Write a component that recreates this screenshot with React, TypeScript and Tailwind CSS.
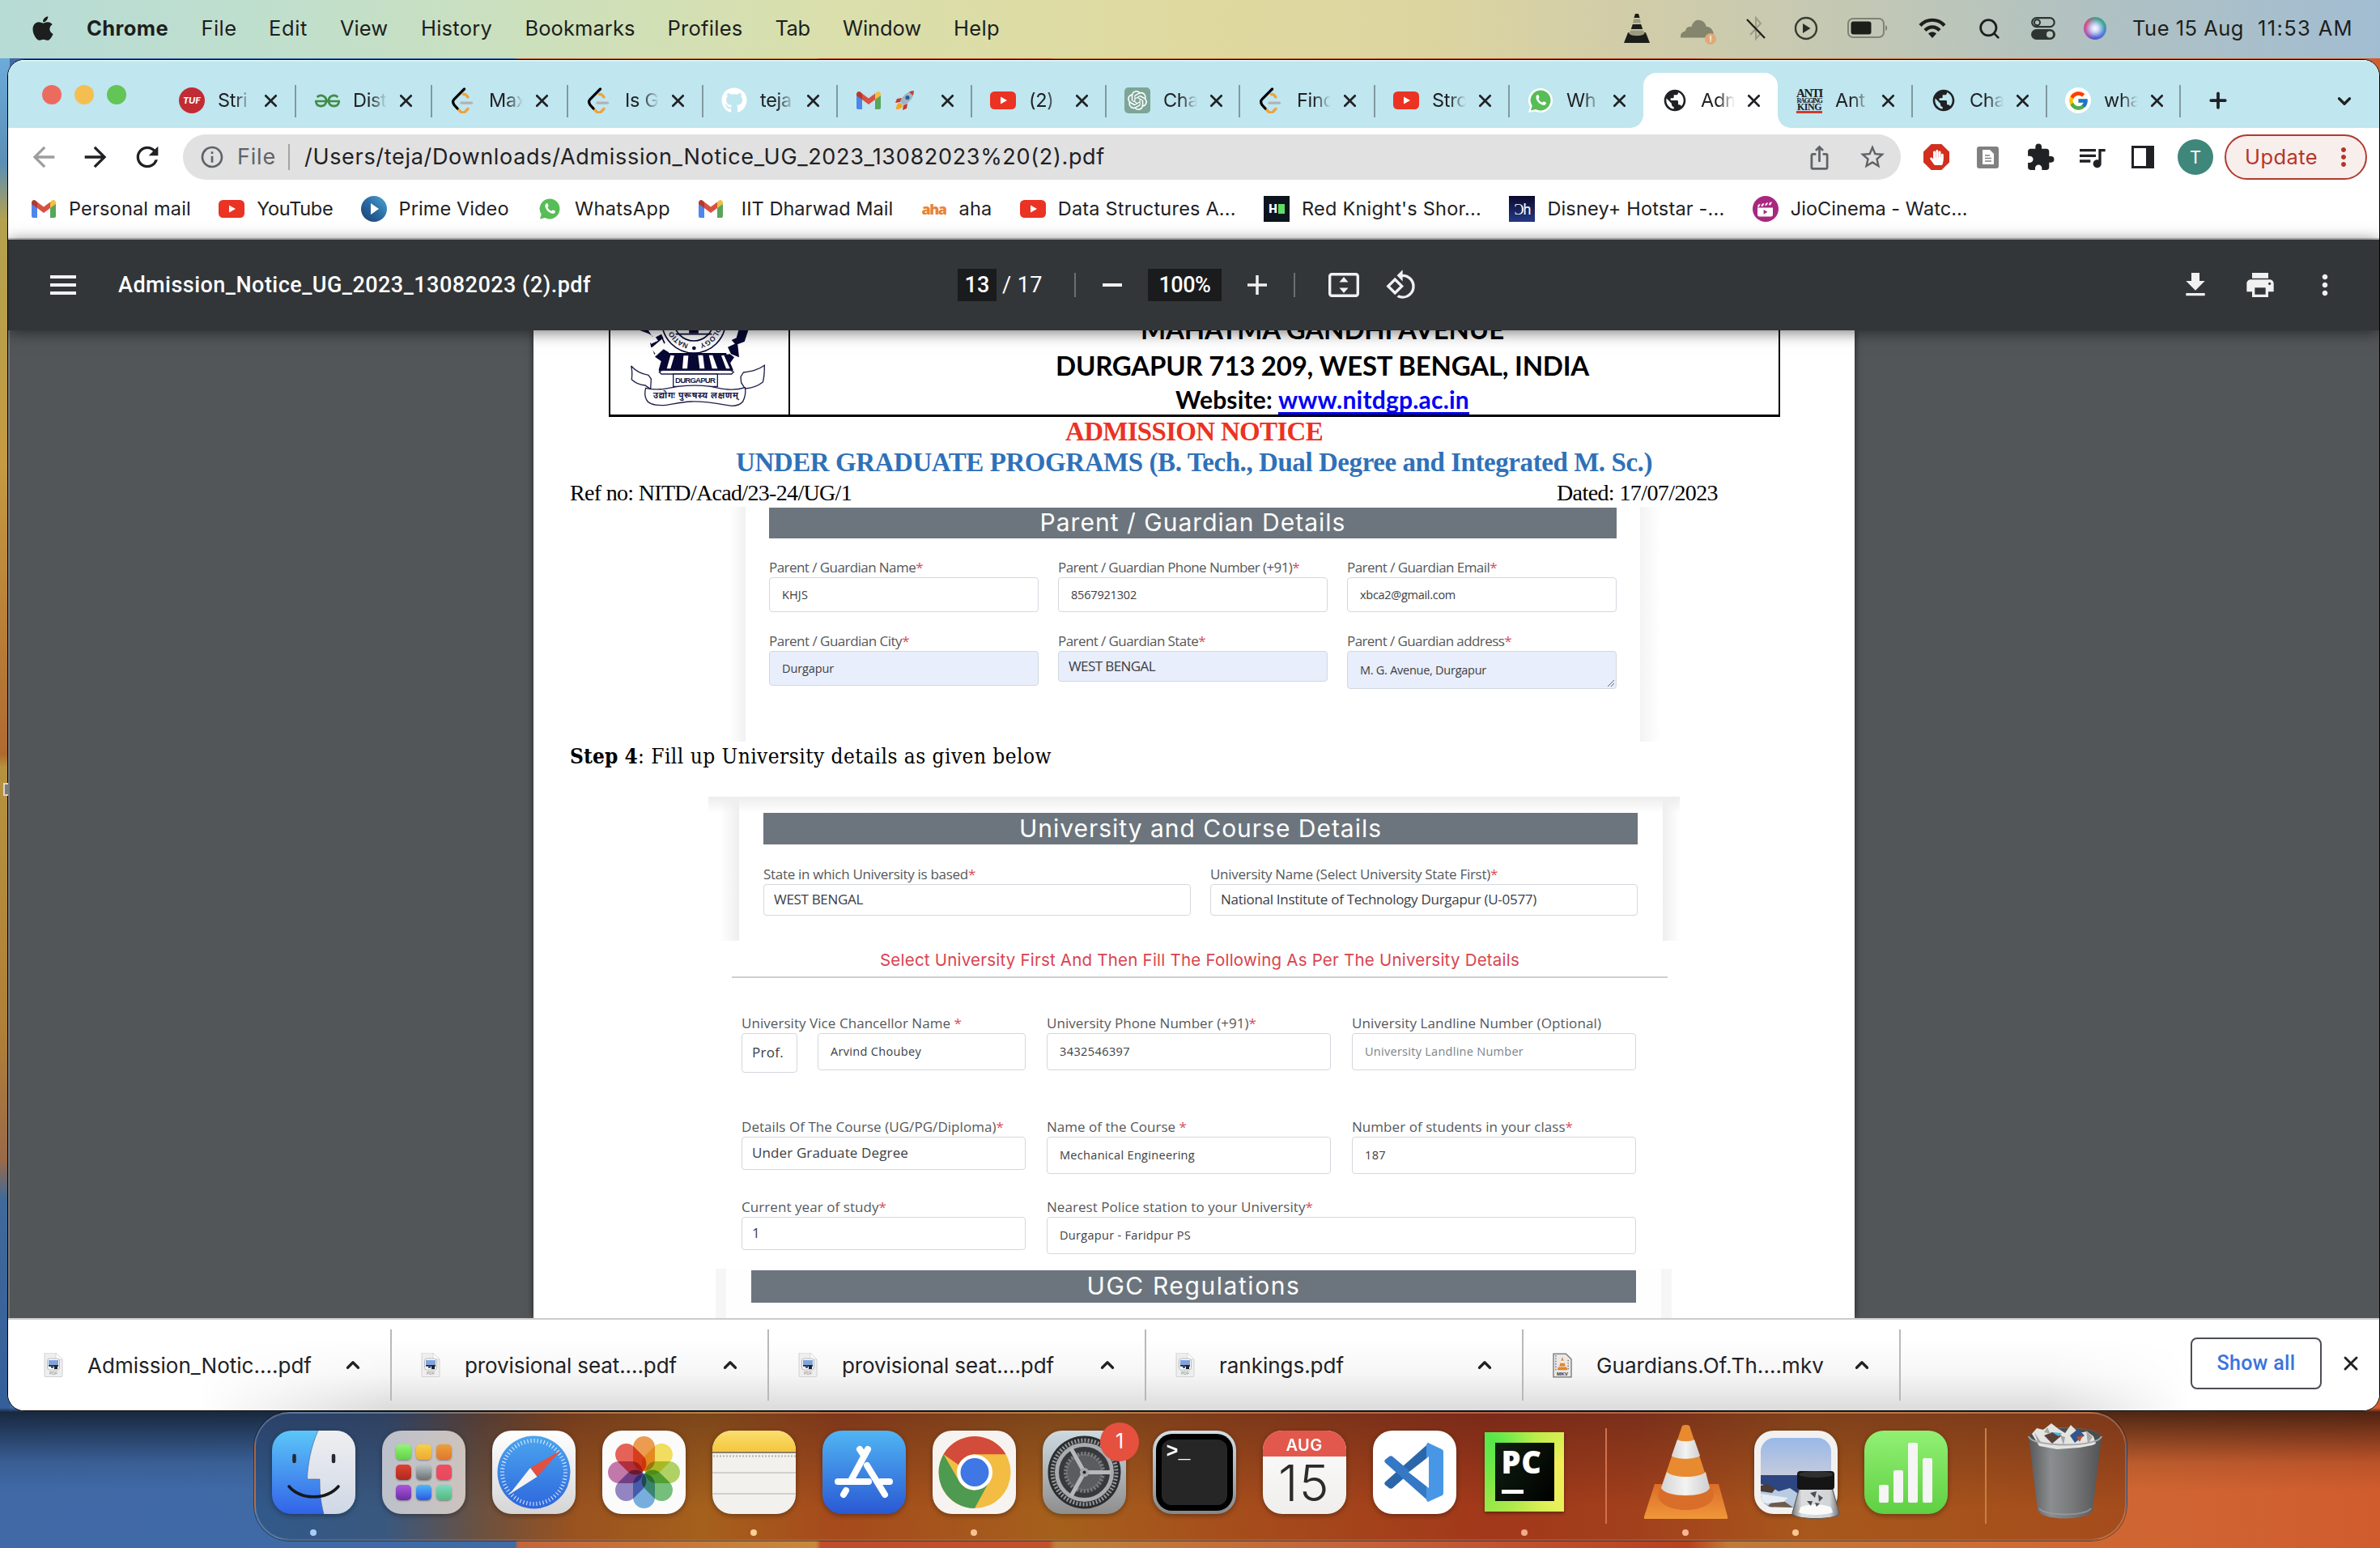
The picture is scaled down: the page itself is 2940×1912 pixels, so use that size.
import { useLayoutEffect, useRef, useState, type ReactNode } from "react";
import { FaApple, FaGithub, FaHandPaper } from "react-icons/fa";
import { FcGoogle } from "react-icons/fc";
import { SiGeeksforgeeks, SiOpenai } from "react-icons/si";
import {
  MdExtension, MdStarOutline, MdIosShare, MdQueueMusic, MdPublic, MdRotate90DegreesCcw, MdPrint,
  MdFileDownload, MdMoreVert, MdRefresh, MdInfoOutline, MdArrowBack, MdArrowForward,
} from "react-icons/md";
import { ChevronDown, ChevronUp, Plus, Search, X } from "lucide-react";

/* Single line of text whose tracking is adjusted to occupy an exact width. */
function Fit({ w, className = "", children }: { w: number; className?: string; children: ReactNode }) {
  const ref = useRef<HTMLSpanElement>(null);
  const [ls, setLs] = useState(0);
  useLayoutEffect(() => {
    const el = ref.current;
    if (!el) return;
    el.style.letterSpacing = "0px";
    const natural = el.getBoundingClientRect().width;
    const n = (el.textContent || "").length || 1;
    const next = (w - natural) / n;
    el.style.letterSpacing = next + "px";
    setLs(next);
  }, [w]);
  return (
    <span ref={ref} className={"inline-block shrink-0 whitespace-pre " + className} style={{ letterSpacing: ls }}>
      {children}
    </span>
  );
}

/* ---------- small logos ---------- */
function Gmail({ className = "" }: { className?: string }) {
  return (
    <svg viewBox="0 0 30 22" className={"h-[22px] w-[30px] " + className}>
      <path d="M0 3v17a2 2 0 0 0 2 2h5V9z" fill="#4f86ec" />
      <path d="M30 3v17a2 2 0 0 1-2 2h-5V9z" fill="#58a55c" />
      <path d="M23 2.500V10l7-5V3.500C30 .5 27-.8 25 .8z" fill="#f1bf42" />
      <path d="M0 3.500V5l7 5V2.500L5 .8C3-.8 0 .5 0 3.500z" fill="#b4392d" />
      <path d="M7 10V2.500l8 6 8-6V10l-8 6z" fill="#d85140" />
    </svg>
  );
}
function YouTubeMark() {
  return (
    <svg viewBox="0 0 32 22" className="h-[22px] w-8">
      <rect width="32" height="22" rx="5.500" fill="#ea3323" />
      <path d="M13 6.500v9l8-4.500z" fill="#fff" />
    </svg>
  );
}
function WhatsApp({ halo = false }: { halo?: boolean }) {
  return (
    <svg viewBox="0 0 30 30" className="size-[30px]">
      {halo && <path d="M15 0a15 15 0 1 1-6.500 28.500L0 30l2-7.500A15 15 0 0 1 15 0z" fill="#fff" />}
      <path d="M15 2.500a12.500 12.500 0 1 1-6 23.500L3 27.500l1.700-5.700A12.500 12.500 0 0 1 15 2.500z" fill="#57bd56" />
      <path d="M10.500 8.500c1-.8 1.800-.5 2.200.5l.8 2c.3.800-1 1.800-1 2.200.5 1.500 2.800 3.800 4.600 4.300.6.200 1.500-1.600 2.200-1.300l2.300 1.200c.6.300.4 1.800-.3 2.500-1.500 1.500-4.200 1.200-7-.8-3-2.200-6.700-7.600-3.800-10.600z" fill="#fff" />
    </svg>
  );
}
function Rocket() {
  return (
    <svg viewBox="0 0 26 26" className="size-[26px]">
      <path d="M2 24c0-5 2-8 5-8l3 3c0 3-3 5-8 5z" fill="#f5a623" />
      <path d="M9 10l-6 1-2 5 6-1zM16 17l-1 6-5 2 1-6z" fill="#c8372d" />
      <path d="M7 15C9 8 15 2 24 1c0 9-6 15-13 18z" fill="#9fb4c4" />
      <path d="M18 2.500C20 1.500 22 1 24 1c0 2-.4 4-1.300 6z" fill="#c8372d" />
      <circle cx="16" cy="9.500" r="2.600" fill="#2a5f8f" />
    </svg>
  );
}
function Fav({ kind }: { kind: string }) {
  switch (kind) {
    case "tuf":
      return (
        <span className="flex size-8 items-center justify-center rounded-full bg-[#c22b33] font-['Lato'] text-[12px] font-black italic text-white">
          TUF
        </span>
      );
    case "gfg": return <SiGeeksforgeeks className="size-[31px] text-[#3f8d46]" />;
    case "lc":
      return (
        <svg viewBox="0 0 32 32" className="size-8">
          <path d="M9 26l4 4c1.500 1.300 4 1.300 5.500 0l3.500-3.500" fill="none" stroke="#f0a13a" strokeWidth="3.200" strokeLinecap="round" />
          <path d="M16.500 8.500c2-.6 3.800 1 5.500 3.500" fill="none" stroke="#f0a13a" strokeWidth="3.200" strokeLinecap="round" />
          <path d="M17.500 2L5 14.500c-1.800 2-1.800 4.500 0 7L9 26" fill="none" stroke="#000" strokeWidth="3.200" strokeLinecap="round" />
          <path d="M14 19.200h12.500" stroke="#b3b3b3" strokeWidth="3.200" strokeLinecap="round" />
        </svg>
      );
    case "gh": return <FaGithub className="size-8 text-white" />;
    case "gmail": return <Gmail />;
    case "yt": return <YouTubeMark />;
    case "gpt":
      return (
        <span className="flex size-8 items-center justify-center rounded-[5px] bg-[#7ca597]">
          <SiOpenai className="size-6 text-white" />
        </span>
      );
    case "wa": return <WhatsApp halo />;
    case "globe": return <MdPublic className="size-8 text-[#202124]" />;
    case "anti":
      return (
        <span className="flex w-8 flex-col items-center border-b-[3px] border-[#d23a2c] font-['Liberation_Serif'] font-bold text-[#18202a]">
          <Fit w={32} className="text-[15px] leading-[14px]">ANTI</Fit>
          <Fit w={31} className="text-[8px] leading-[6px]">RAGGING</Fit>
          <Fit w={30} className="text-[12px] leading-[9px]">KING</Fit>
        </span>
      );
    default:
      return (
        <span className="flex size-8 items-center justify-center rounded-full bg-white">
          <FcGoogle className="size-[27px]" />
        </span>
      );
  }
}

/* ---------- menu bar ---------- */
function MenuBar() {
  return (
    <div className="flex h-[72px] shrink-0 items-center bg-[linear-gradient(90deg,#b7dcd6_0%,#c0dfcc_12%,#cee0ba_24%,#dadfac_35%,#dfd99f_50%,#dcd5a0_60%,#d2cda8_68%,#c3c8b4_78%,#b0c1c2_88%,#a2bdd2_100%)] pb-0.5 font-['Inter'] text-[25.500px] text-[#1c1f1d]">
      <FaApple className="ml-[36px] size-[34px]" />
      <Fit w={101} className="ml-[37px] font-bold">Chrome</Fit>
      <Fit w={44} className="ml-[40.500px]">File</Fit>
      <Fit w={48} className="ml-[39.500px]">Edit</Fit>
      <Fit w={59} className="ml-[40px]">View</Fit>
      <Fit w={88} className="ml-[41px]">History</Fit>
      <Fit w={136} className="ml-[40.500px]">Bookmarks</Fit>
      <Fit w={93} className="ml-[40px]">Profiles</Fit>
      <Fit w={43} className="ml-[40px]">Tab</Fit>
      <Fit w={97} className="ml-[40.500px]">Window</Fit>
      <Fit w={57} className="ml-[40px]">Help</Fit>
      <div className="grow" />
      <svg viewBox="0 0 32 36" className="mr-[34px] h-9 w-8">
        <path d="M14 0h4l1.600 5h-7.200zM10.800 13h10.400l2 6H8.800zM6 23l-1 .3L0 36h32l-5-12.700L25 23c-2 5-16 5-19 0z" fill="#1b1d18" />
        <path d="M12.200 6.500h7.600l1.200 5H11zM8 20.500h16l1.500 4c-2 3.500-17 3.500-19 0z" fill="#9b9a80" />
      </svg>
      <div className="relative mr-[34px] h-[36px] w-[50px]">
        <svg viewBox="0 0 50 30" className="mt-[7px] h-[25px] w-[50px]">
          <path d="M0 27c-1-6 3-9 7-10 1-5 4-7 9-6C18 4 22 1 26 1c7 0 11 5 12 10 6-1 12 6 11 16z" fill="#85846c" />
        </svg>
        <span className="absolute right-0.5 -bottom-0.5 flex h-[14px] w-[14px] items-center justify-center rounded-full bg-[#dfa97a] text-[11px] font-bold text-[#f5eee0]">!</span>
      </div>
      <svg viewBox="0 0 26 32" className="mr-[34px] h-8 w-[26px]" fill="none">
        <path d="M6 24L19 10l-6-7v26l6-7L7 11" stroke="#9d9d87" strokeWidth="2" />
        <path d="M2 5l22 23" stroke="#1d1f1a" strokeWidth="2.200" />
      </svg>
      <svg viewBox="0 0 30 30" className="mr-[36px] size-[30px]">
        <circle cx="15" cy="15" r="13" fill="none" stroke="#383b33" strokeWidth="2.400" />
        <path d="M11 9l9.500 6L11 21z" fill="#2b2d27" />
      </svg>
      <svg viewBox="0 0 50 26" className="mr-[38px] h-[26px] w-[50px]">
        <rect x="1" y="1" width="44" height="23" rx="6" fill="none" stroke="#7f8376" strokeWidth="2" />
        <rect x="4.500" y="4.500" width="25" height="16" rx="3" fill="#1c1e1a" />
        <path d="M47 9c3 1 3 6 0 7z" fill="#7f8376" />
      </svg>
      <svg viewBox="0 0 34 26" className="mr-[39px] h-[26px] w-[34px]" fill="none" stroke="#1c1f1d" strokeWidth="4.200">
        <path d="M2 9.500C10 .5 24 .5 32 9.500M8 15.500c5-5.600 13-5.600 18 0" />
        <path d="M17 25l-5-5.500c3-2.600 7-2.600 10 0z" fill="#1c1f1d" stroke="none" />
      </svg>
      <Search className="mr-[37px] size-[29px] text-[#1c1f1d]" strokeWidth={2.300} />
      <svg viewBox="0 0 30 28" className="mr-[35px] h-7 w-[30px]">
        <rect x="1.200" y="1.200" width="27.500" height="11" rx="5.500" fill="none" stroke="#2e3431" strokeWidth="2.200" />
        <circle cx="7.500" cy="6.700" r="3.500" fill="none" stroke="#2e3431" strokeWidth="2" />
        <rect x="0" y="15" width="30" height="13" rx="6.500" fill="#2e3431" />
        <circle cx="23" cy="21.500" r="4" fill="#b9c4be" />
      </svg>
      <span className="mr-[32px] size-[28px] rounded-full bg-[radial-gradient(circle_at_50%_50%,#fff_0%,#c8d4f5_25%,transparent_60%),conic-gradient(#4d9c8f,#37a892,#4f7fd8,#4b5bd0,#b455b8,#d84f7f,#4d9c8f)]" />
      <Fit w={138}>Tue 15 Aug</Fit>
      <Fit w={118} className="mr-[33px] ml-[17px]">11:53 AM</Fit>
    </div>
  );
}

/* ---------- tabs ---------- */
const TABS: { k: string; t: string; w: string; active?: boolean; nosep?: boolean }[] = [
  { k: "tuf", t: "Stri", w: "w-[167px]" },
  { k: "gfg", t: "Dist", w: "w-[168px]" },
  { k: "lc", t: "Max", w: "w-[168px]" },
  { k: "lc", t: "Is G", w: "w-[167px]" },
  { k: "gh", t: "teja", w: "w-[166px]" },
  { k: "gmail", t: "rocket", w: "w-[166px]" },
  { k: "yt", t: "(2)", w: "w-[166px]" },
  { k: "gpt", t: "Cha", w: "w-[165px]" },
  { k: "lc", t: "Find", w: "w-[167px]" },
  { k: "yt", t: "Stro", w: "w-[166px]" },
  { k: "wa", t: "Wh", w: "w-[166px]", nosep: true },
  { k: "globe", t: "Adm", w: "w-[166px]", active: true, nosep: true },
  { k: "anti", t: "Ant", w: "w-[166px]" },
  { k: "globe", t: "Cha", w: "w-[166px]" },
  { k: "google", t: "wha", w: "w-[165px]" },
];
function TabStrip() {
  return (
    <div className="flex h-[84px] shrink-0 border-t-[2px] border-[#d9f1f6] bg-[#c0e6ef]">
      <div className="mt-[29px] flex w-[188px] gap-4 pl-[42px]">
        <span className="size-6 rounded-full bg-[#ec6b5f]" />
        <span className="size-6 rounded-full bg-[#f4bf50]" />
        <span className="size-6 rounded-full bg-[#62c555]" />
      </div>
      {TABS.map((t, i) => (
        <div key={i} className={"relative mt-[14px] flex h-[68px] shrink-0 items-center pl-[23px] " + t.w + (t.active ? " rounded-t-[16px] bg-white" : "")}>
          {t.active && (
            <>
              <span className="absolute bottom-0 -left-4 size-4 bg-[radial-gradient(circle_at_0_0,transparent_15.500px,#fff_16px)]" />
              <span className="absolute -right-4 bottom-0 size-4 bg-[radial-gradient(circle_at_100%_0,transparent_15.500px,#fff_16px)]" />
            </>
          )}
          <span className="flex w-8 items-center justify-center"><Fav kind={t.k} /></span>
          <span className="ml-4 w-[42px] font-['Inter'] text-[23.500px] tracking-[-0.3px] whitespace-pre text-[#202124] [mask-image:linear-gradient(90deg,#000_50%,transparent_100%)]">
            {t.t === "rocket" ? <Rocket /> : t.t}
          </span>
          <X className="ml-[11px] size-[25px] shrink-0 text-[#202124]" strokeWidth={2.500} />
          {!t.nosep && <span className="absolute top-[15px] -right-px h-10 w-0.5 bg-[#81999f]" />}
        </div>
      ))}
      <Plus className="mt-[33px] ml-[32px] size-[30px] text-[#202124]" strokeWidth={3} />
      <div className="grow" />
      <ChevronDown className="mt-[36px] mr-[30px] size-[26px] text-[#202124]" strokeWidth={3} />
    </div>
  );
}

function NavBar() {
  return (
    <div className="flex h-[72px] shrink-0 items-center bg-white">
      <MdArrowBack className="ml-[24px] size-[40px] text-[#9e9e9e]" />
      <MdArrowForward className="ml-[24px] size-[40px] text-[#202124]" />
      <MdRefresh className="ml-[24px] size-[40px] text-[#202124]" />
      <div className="ml-[24px] flex h-14 w-[2122px] items-center rounded-full bg-[#e1e1e1] font-['Inter'] text-[27px]">
        <MdInfoOutline className="ml-[20px] size-8 text-[#5f6368]" />
        <Fit w={48} className="ml-[15px] text-[#5f6368]">File</Fit>
        <span className="ml-[15px] h-8 w-0.5 bg-[#a3a4a6]" />
        <Fit w={989} className="ml-[18px] text-[#202124]">/Users/teja/Downloads/Admission_Notice_UG_2023_13082023%20(2).pdf</Fit>
        <div className="grow" />
        <MdIosShare className="mr-[31px] size-[33px] text-[#5f6368]" />
        <MdStarOutline className="mr-[17px] size-[36px] text-[#5f6368]" />
      </div>
      <span className="ml-[28px] flex size-8 items-center justify-center bg-[#d1301f] [clip-path:polygon(30%_0,70%_0,100%_30%,100%_70%,70%_100%,30%_100%,0_70%,0_30%)]">
        <FaHandPaper className="size-[19px] text-white" />
      </span>
      <span className="ml-[34px] flex h-[27px] w-[27px] items-center justify-center rounded-[3px] bg-[#808080]">
        <svg viewBox="0 0 14 18" className="h-[18px] w-[14px]">
          <path d="M0 0h9l5 5v13H0z" fill="#fff" />
          <path d="M3 7h6M3 10.500h8M3 14h8" stroke="#808080" strokeWidth="1.600" />
        </svg>
      </span>
      <MdExtension className="ml-[33px] size-[37px] text-[#202124]" />
      <MdQueueMusic className="ml-[25px] size-[40px] text-[#202124]" />
      <span className="ml-[29px] h-7 w-[28px] border-[3.500px] border-r-[10px] border-[#202124]" />
      <span className="ml-[29px] flex size-11 items-center justify-center rounded-full bg-[#3f877a] font-['Roboto'] text-[22px] text-white">T</span>
      <div className="ml-[14px] flex h-14 w-[176px] items-center rounded-full border-2 border-[#b23a2e] bg-[#f8eeec] text-[#b3362b]">
        <Fit w={90} className="ml-[23px] font-['Inter'] text-[25.500px]">Update</Fit>
        <MdMoreVert className="ml-[14px] size-[36px]" />
      </div>
    </div>
  );
}

const BOOKMARKS: { icon: ReactNode; t: string; w: number }[] = [
  { icon: <Gmail />, t: "Personal mail", w: 151 },
  { icon: <YouTubeMark />, t: "YouTube", w: 94 },
  {
    icon: (
      <span className="flex size-8 items-center justify-center rounded-full bg-[linear-gradient(45deg,#1d3f6e,#2a6aa3_50%,#4ea8d4)]">
        <svg viewBox="0 0 10 14" className="ml-0.5 h-[14px] w-[10px]"><path d="M0 0l10 7-10 7z" fill="#fff" /></svg>
      </span>
    ), t: "Prime Video", w: 136,
  },
  { icon: <WhatsApp />, t: "WhatsApp", w: 118 },
  { icon: <Gmail />, t: " IIT Dharwad Mail", w: 194 },
  { icon: <span className="font-['Open_Sans'] text-[18px] font-extrabold tracking-[-1.500px] text-[#e8833a]">aha</span>, t: "aha", w: 41 },
  { icon: <YouTubeMark />, t: "Data Structures A...", w: 220 },
  {
    icon: (
      <span className="flex size-8 items-center justify-center bg-[#0d141e] font-['Roboto'] text-[15px] font-black text-white">
        H<span className="ml-px h-3 w-2 bg-[#5fdc68]" />
      </span>
    ), t: "Red Knight's Shor...", w: 222,
  },
  {
    icon: (
      <span className="flex size-8 items-center justify-center bg-[linear-gradient(#0b0a2c,#243a86)] font-['Roboto'] text-[18px] tracking-[-1px] text-white">
        Ɔh
      </span>
    ), t: "Disney+ Hotstar -...", w: 219,
  },
  {
    icon: (
      <span className="flex size-8 items-center justify-center rounded-full bg-[#a8287f]">
        <svg viewBox="0 0 22 20" className="h-[19px] w-[21px]">
          <path d="M1 8h20v9a2.500 2.500 0 0 1-2.500 2.500h-15A2.500 2.500 0 0 1 1 17zM2 4l3-1-2 4H1zM7 3l3-1-2 4H5.500zM12 2l3-1-2 4h-2.500zM17 1l3-.5-2 4h-2.500z" fill="#fff" />
          <path d="M9 10.500v6l5-3z" fill="#a8287f" />
        </svg>
      </span>
    ), t: "JioCinema - Watc...", w: 219,
  },
];

function Bookmarks() {
  return (
    <div className="flex h-16 shrink-0 items-start gap-[34.300px] bg-white pl-[28px]">
      {BOOKMARKS.map((b, i) => (
        <div key={i} className="flex h-14 items-center gap-[15px]">
          <span className="flex w-8 items-center justify-center">{b.icon}</span>
          <Fit w={b.w} className="font-['Inter'] text-[23.500px] text-[#202124]">{b.t}</Fit>
        </div>
      ))}
    </div>
  );
}

/* ---------- pdf viewer ---------- */
function PdfToolbar() {
  return (
    <div className="relative z-10 flex h-[112px] shrink-0 items-center bg-[#323639] font-['Roboto'] text-[27px] font-medium text-white shadow-[0_2px_18px_rgba(0,0,0,0.55)]">
      <span className="ml-[52px] flex w-8 flex-col gap-[6px]">
        <span className="h-1 bg-[#f1f1f1]" /><span className="h-1 bg-[#f1f1f1]" /><span className="h-1 bg-[#f1f1f1]" />
      </span>
      <Fit w={584} className="ml-[52px]">Admission_Notice_UG_2023_13082023 (2).pdf</Fit>
      <span className="ml-[453px] flex h-10 w-12 items-center justify-center bg-[#191b1c]"><Fit w={31}>13</Fit></span>
      <Fit w={50} className="ml-[7px] font-normal">/ 17</Fit>
      <span className="ml-[39px] h-[30px] w-0.5 bg-[#6c6f71]" />
      <span className="ml-[33px] h-1 w-6 bg-[#f1f1f1]" />
      <span className="ml-[32px] flex h-10 w-[91px] items-center justify-center bg-[#191b1c]"><Fit w={64}>100%</Fit></span>
      <span className="ml-[32px] flex h-6 w-6 items-center justify-center">
        <svg viewBox="0 0 24 24" className="size-6"><path d="M0 12h24M12 0v24" stroke="#f1f1f1" strokeWidth="3.500" /></svg>
      </span>
      <span className="ml-[33px] h-[30px] w-0.5 bg-[#6c6f71]" />
      <svg viewBox="0 0 38 30" className="ml-[41px] h-[30px] w-[38px]">
        <rect x="1.700" y="1.700" width="34.600" height="26.600" rx="2.500" fill="none" stroke="#f1f1f1" strokeWidth="3.400" />
        <path d="M19 5l5.500 6.500h-11zM19 25l5.500-6.500h-11z" fill="#f1f1f1" />
      </svg>
      <MdRotate90DegreesCcw className="ml-[32px] size-[40px] text-[#f1f1f1]" />
      <div className="grow" />
      <MdFileDownload className="mr-[40px] size-[40px] text-[#f1f1f1]" />
      <MdPrint className="mr-[40px] size-[40px] text-[#f1f1f1]" />
      <MdMoreVert className="mr-[47px] size-[40px] text-[#f1f1f1]" />
    </div>
  );
}

function Emblem() {
  return (
    <svg viewBox="41 24 660 312" preserveAspectRatio="none" className="h-[104px] w-[220px] shrink-0">
      <g fill="#070733">
        <path d="M150 24h32l18 30 30-16 8 16-46 34-4-18 24-16-30-18zM196 70l36-24 12 24-40 44-10-30zM206 122l32-28 20 12-26 34z" />
        <path d="M552 24h-36l-8 28-18 8 16 18 32-12zM512 70l-36 16 12 26 30 12zM484 112l-32 4 10 18 24 10 14-20z" />
        <path d="M238 108h232l26 62-6 14H226l-6-14z" />
      </g>
      <g fill="#fff">
        <path d="M178 52l26-8 14 18-26 12zM192 90l40-34 10 22-30 38zM278 118l-14 48h-14l14-50zM330 118l-4 48h-18l4-48zM366 116h18l6 50h-18zM420 116l18 50h-20l-12-50zM462 116l22 50h-14l-18-48z" />
        <circle cx="350" cy="-10" r="118" stroke="#070733" strokeWidth="5" />
        <circle cx="350" cy="-10" r="73" stroke="#070733" strokeWidth="5" />
      </g>
      <path d="M283 38h134M335 24h30v8h-30z" stroke="#070733" strokeWidth="5" fill="#070733" />
      <path id="arcA" d="M350 77A87 87 0 0 1 263-10" fill="none" />
      <path id="arcB" d="M437-10A87 87 0 0 1 350 77" fill="none" />
      <g fill="#1b1b48" fontFamily="Liberation Sans" fontWeight="700" fontSize="26">
        <text><textPath href="#arcA" startOffset="20">NATIO</textPath></text>
        <text textAnchor="end"><textPath href="#arcB" startOffset="114">OLOGY</textPath></text>
      </g>
      <circle cx="351" cy="90" r="7" fill="#070733" />
      <g fill="#fff" stroke="#1d1d4a" strokeWidth="4">
        <path d="M232 172h254l12 6-8 8H230l-8-8z" />
        <path d="M274 186h164v46H274z" />
        <path d="M118 156c16 18 40 30 64 34l10 14-2 38-20-14c-18-2-38-10-50-22 2-18 2-34-2-50z" />
        <path d="M612 154c-24 18-50 22-78 26l-10 16 2 22 14 22c26-2 48-10 66-24 6-20 6-40 6-62z" />
        <path d="M172 238c50 12 90-2 120-6 50-6 90-4 120 0 30 6 80 20 128 4 4 20-2 40-8 52-10 12-22 16-42 16-60-10-100-18-150-16-50 2-80 14-110 14-30 0-50-8-56-22-6-14-6-28-2-42z" />
      </g>
      <text x="356" y="219" textAnchor="middle" textLength="150" fontFamily="Liberation Sans" fontWeight="700" fontSize="29" fill="#1b1b48">DURGAPUR</text>
      <text x="357" y="277" textAnchor="middle" textLength="316" fontFamily="Noto Sans, Noto Sans Devanagari, sans-serif" fontWeight="700" fontSize="32" fill="#1b1b48">उद्योगः पुरूषस्य लक्षणम्</text>
    </svg>
  );
}

function Field({ label, lw, star = true, value, vw, width, h, big = false, filled = false, muted = false, handle = false }: {
  label: string; lw: number; star?: boolean; value: string; vw: number; width: string; h: string;
  big?: boolean; filled?: boolean; muted?: boolean; handle?: boolean;
}) {
  return (
    <div className={"flex shrink-0 flex-col font-['Open_Sans'] " + width}>
      <Fit w={lw} className="h-6 self-start text-[17px] leading-[23px] text-[#55595d]">
        {label}{star && <span className="text-[#dc4a56]">*</span>}
      </Fit>
      <Box value={value} vw={vw} h={h} big={big} filled={filled} muted={muted} handle={handle} width="w-full" />
    </div>
  );
}
function Box({ value, vw, h, width, big = false, filled = false, muted = false, handle = false }: {
  value: string; vw: number; h: string; width: string; big?: boolean; filled?: boolean; muted?: boolean; handle?: boolean;
}) {
  return (
    <div className={"relative flex items-center rounded-[4px] border-[1.500px] border-[#d3d8de] font-['Open_Sans'] " + h + " " + width + (filled ? " bg-[#e8eefb]" : " bg-white") + (big ? " pb-px pl-3 text-[17px]" : " pl-[15px] text-[14.500px]") + (muted ? " text-[#7c838a]" : " text-[#3b4045]")}>
      <Fit w={vw}>{value}</Fit>
      {handle && (
        <svg viewBox="0 0 8 8" className="absolute right-0.5 bottom-0.5 size-2"><path d="M0 8l8-8M4 8l4-4" stroke="#666" strokeWidth="1" /></svg>
      )}
    </div>
  );
}
function Bar({ children, w, className }: { children: ReactNode; w: number; className: string }) {
  return (
    <div className={"flex shrink-0 items-center justify-center bg-[#6c757d] pb-0.5 font-['Inter'] text-[30px] leading-[36px] text-white " + className}>
      <Fit w={w}>{children}</Fit>
    </div>
  );
}

function Page() {
  return (
    <div className="flex h-[1220px] w-[1632px] flex-col overflow-hidden bg-white shadow-[0_0_8px_rgba(0,0,0,0.6)]">
      <div className="ml-[93px] flex h-[107px] w-[1447px] shrink-0 border-x-2 border-b-[3px] border-black">
        <div className="flex w-[222px] shrink-0 justify-center border-r-2 border-black"><Emblem /></div>
        <div className="-mt-[25px] flex grow flex-col items-center pl-[94px] font-['Lato'] text-[33px] font-bold text-black">
          <Fit w={449} className="h-[46px] leading-[46px]">MAHATMA GANDHI AVENUE</Fit>
          <Fit w={659} className="h-[45px] leading-[45px]">DURGAPUR 713 209, WEST BENGAL, INDIA</Fit>
          <Fit w={363} className="h-[38px] text-[30px] leading-[38px]">
            Website: <span className="text-[#0000f5] underline decoration-[3px] underline-offset-[4px] [text-decoration-skip-ink:none]">www.nitdgp.ac.in</span>
          </Fit>
        </div>
      </div>
      <div className="flex h-[38px] shrink-0 items-center justify-center font-['Liberation_Serif'] text-[33px] font-bold text-[#eb3323]">
        <Fit w={318}>ADMISSION NOTICE</Fit>
      </div>
      <div className="flex h-[38px] shrink-0 items-center justify-center font-['Liberation_Serif'] text-[33px] font-bold text-[#2f71b8]">
        <Fit w={1132}>UNDER GRADUATE PROGRAMS (B. Tech., Dual Degree and Integrated M. Sc.)</Fit>
      </div>
      <div className="flex h-[35px] shrink-0 items-center justify-between pr-[169px] pl-[45px] font-['Liberation_Serif'] text-[28px] text-black">
        <Fit w={348}>Ref no: NITD/Acad/23-24/UG/1</Fit>
        <Fit w={199}>Dated: 17/07/2023</Fit>
      </div>

      <div className="ml-[241px] flex h-[290px] w-[1151px] shrink-0">
        <div className="w-[21px] bg-[linear-gradient(90deg,#fff,#f1f1f1)]" />
        <div className="flex w-[1105px] flex-col pt-px pl-[29px]">
          <Bar w={378} className="h-[38px] w-[1047px]">Parent / Guardian Details</Bar>
          <div className="mt-6 flex gap-6">
            <Field label="Parent / Guardian Name" lw={190} value="KHJS" vw={32} width="w-[333px]" h="h-[43px]" />
            <Field label="Parent / Guardian Phone Number (+91)" lw={298} value="8567921302" vw={81} width="w-[333px]" h="h-[43px]" />
            <Field label="Parent / Guardian Email" lw={185} value="xbca2@gmail.com" vw={118} width="w-[333px]" h="h-[43px]" />
          </div>
          <div className="mt-6 flex gap-6">
            <Field label="Parent / Guardian City" lw={173} value="Durgapur" vw={64} width="w-[333px]" h="h-[43px]" filled />
            <Field label="Parent / Guardian State" lw={182} value="WEST BENGAL" vw={107} width="w-[333px]" h="h-[38px]" big filled />
            <Field label="Parent / Guardian address" lw={203} value="M. G. Avenue, Durgapur" vw={156} width="w-[333px]" h="h-[47px]" filled handle />
          </div>
        </div>
        <div className="w-[25px] bg-[linear-gradient(90deg,#f3f3f3,#fff)]" />
      </div>

      <div className="flex h-[68px] shrink-0 pl-[45px] font-['DejaVu_Serif'] text-[26px] leading-[36px] font-stretch-condensed text-black">
        <Fit w={84} className="font-bold">Step 4</Fit>
        <Fit w={511}>: Fill up University details as given below</Fit>
      </div>

      <div className="ml-[216px] flex h-[178px] w-[1200px] shrink-0 bg-[linear-gradient(#ededed,#fff_20px)]">
        <div className="w-[38px] bg-[linear-gradient(90deg,transparent_40%,#eeeeee)]" />
        <div className="flex w-[1141px] flex-col pt-[20px] pl-[30px]">
          <Bar w={448} className="h-[39px] w-[1080px]">University and Course Details</Bar>
          <div className="mt-[25px] flex gap-6">
            <Field label="State in which University is based" lw={262} value="WEST BENGAL" vw={110} width="w-[528px]" h="h-[39px]" big />
            <Field label="University Name (Select University State First)" lw={355} value="National Institute of Technology Durgapur (U-0577)" vw={390} width="w-[528px]" h="h-[39px]" big />
          </div>
        </div>
        <div className="w-[21px] bg-[linear-gradient(90deg,#eeeeee,transparent)]" />
      </div>

      <div className="ml-[245px] flex h-[46px] w-[1156px] shrink-0 justify-center border-b-2 border-[#cfd0d1] pt-[9px] font-['Inter'] text-[20.500px] leading-[30px] text-[#d9434f]">
        <Fit w={790}>Select University First And Then Fill The Following As Per The University Details</Fit>
      </div>

      <div className="flex shrink-0 flex-col pt-[44px] pl-[257px]">
        <div className="flex h-[128px] gap-[26px]">
          <div className="flex w-[351px] flex-col">
            <Fit w={272} className="h-6 self-start font-['Open_Sans'] text-[17px] leading-[23px] text-[#55595d]">
              University Vice Chancellor Name <span className="text-[#dc4a56]">*</span>
            </Fit>
            <div className="flex justify-between">
              <Box value="Prof." vw={39} h="h-[49px]" width="w-[69px]" big />
              <Box value="Arvind Choubey" vw={112} h="h-[46px]" width="w-[257px]" />
            </div>
          </div>
          <Field label="University Phone Number (+91)" lw={259} value="3432546397" vw={87} width="w-[351px]" h="h-[46px]" />
          <Field label="University Landline Number (Optional)" lw={308} star={false} value="University Landline Number" vw={196} width="w-[351px]" h="h-[46px]" muted />
        </div>
        <div className="flex h-[99px] gap-[26px]">
          <Field label="Details Of The Course (UG/PG/Diploma)" lw={324} value="Under Graduate Degree" vw={193} width="w-[351px]" h="h-[41px]" big />
          <Field label="Name of the Course " lw={173} value="Mechanical Engineering" vw={167} width="w-[351px]" h="h-[46px]" />
          <Field label="Number of students in your class" lw={273} value="187" vw={26} width="w-[351px]" h="h-[46px]" />
        </div>
        <div className="flex h-[88px] gap-[26px]">
          <Field label="Current year of study" lw={179} value="1" vw={9} width="w-[351px]" h="h-[41px]" big />
          <Field label="Nearest Police station to your University" lw={329} value="Durgapur - Faridpur PS" vw={162} width="w-[728px]" h="h-[46px]" />
        </div>
      </div>

      <div className="ml-[225px] flex h-[61px] w-[1181px] shrink-0">
        <div className="w-[13px] bg-[#f6f6f6]" />
        <div className="flex w-[1155px] flex-col bg-[#fefefe] pt-0.5 pl-[31px]">
          <Bar w={264} className="h-10 w-[1093px]">UGC Regulations</Bar>
        </div>
        <div className="w-[13px] bg-[#f6f6f6]" />
      </div>
    </div>
  );
}

/* ---------- downloads ---------- */
function PdfIcon() {
  return (
    <svg viewBox="0 0 24 30" className="h-[30px] w-6">
      <path d="M1 0h14l8 8v20.500a1 1 0 0 1-1 1H2a1 1 0 0 1-1-1z" fill="#eeeeee" stroke="#d2d2d2" strokeWidth="1" />
      <path d="M15 0v8h8z" fill="#fff" stroke="#d2d2d2" strokeWidth=".8" />
      <rect x="4.500" y="7" width="15" height="14" rx="3" fill="#f8f8f8" stroke="#a9a9a9" strokeWidth=".8" />
      <rect x="6" y="9" width="12" height="8" fill="#7fa3dc" />
      <path d="M6 15h12v1.500H6zM13 15h4v5h-4zM9 17h3v1.500H9z" fill="#20242c" />
      <text x="12" y="27" textAnchor="middle" fontSize="5" fontFamily="Liberation Sans" fill="#8a8a8a">PDF</text>
    </svg>
  );
}
function MkvIcon() {
  return (
    <svg viewBox="0 0 25 32" className="h-[31px] w-6">
      <path d="M1 1h16l7 7v23H1z" fill="#e9e9e9" stroke="#6f6f6f" strokeWidth="1.300" />
      <path d="M4 3v20M20 9v14" stroke="#777" strokeWidth="1.600" strokeDasharray="1.500 2" />
      <path d="M12.500 5l4 12h-8z" fill="#e8842b" />
      <path d="M11 10h3l1 3h-5z" fill="#fff" />
      <path d="M7 18h11l1 4H6z" fill="#e8842b" />
      <text x="12.500" y="29" textAnchor="middle" fontSize="6.500" fontWeight="700" fontFamily="Liberation Sans" fill="#333">MKV</text>
    </svg>
  );
}
const DOWNLOADS = [
  { t: "Admission_Notic....pdf", w: 277 },
  { t: "provisional seat....pdf", w: 262 },
  { t: "provisional seat....pdf", w: 262 },
  { t: "rankings.pdf", w: 154 },
  { t: "Guardians.Of.Th....mkv", w: 281, mkv: true },
];
function Downloads() {
  return (
    <div className="relative flex h-[114px] shrink-0 items-center border-t-2 border-[#cbcbcb] bg-white pl-[8px]">
      <div className="absolute inset-0 bg-[linear-gradient(transparent_20%,rgba(0,0,0,0.035)_60%,rgba(0,0,0,0.14)_100%)] [mask-image:linear-gradient(90deg,transparent_8%,#000_16%,#000_86%,transparent_92%)]" />
      {DOWNLOADS.map((d, i) => (
        <div key={i} className="relative flex h-[88px] w-[466px] shrink-0 items-center border-r-2 border-[#b9b9b9] pl-[36px]">
          {d.mkv ? <MkvIcon /> : <PdfIcon />}
          <Fit w={d.w} className="ml-[30px] font-['Inter'] text-[26px] text-[#202124]">{d.t}</Fit>
          <div className="grow" />
          <ChevronUp className="mr-[33px] size-[26px] text-[#202124]" strokeWidth={3} />
        </div>
      ))}
      <div className="grow" />
      <span className="relative -mt-1 flex h-16 w-[162px] items-center justify-center rounded-[8px] border-2 border-[#4b4e55] bg-white font-['Roboto'] text-[25px] font-medium text-[#3b73dd]">
        <Fit w={97}>Show all</Fit>
      </span>
      <X className="relative -mt-1 mr-[21px] ml-[22px] size-[28px] text-[#202124]" strokeWidth={2.500} />
    </div>
  );
}

/* ---------- dock ---------- */
const ICON = "size-[103px] shrink-0 overflow-hidden rounded-[24px] drop-shadow-[0_2px_3px_rgba(0,0,0,0.35)]";

function Finder() {
  return (
    <svg viewBox="0 0 103 103" className={ICON}>
      <defs>
        <linearGradient id="fa" x2="0" y2="1"><stop stopColor="#5cc6f8" /><stop offset="1" stopColor="#3263e8" /></linearGradient>
        <linearGradient id="fb" x2="0" y2="1"><stop stopColor="#efeff1" /><stop offset="1" stopColor="#cfd8e6" /></linearGradient>
      </defs>
      <rect width="103" height="103" fill="url(#fa)" />
      <path d="M57 0C48 20 44 42 43.500 60H59c0 16 1 28 5 43h39V0z" fill="url(#fb)" />
      <path d="M57 0C48 20 44 42 43.500 60H59c0 16 1 28 5 43" fill="none" stroke="#3b5b88" strokeWidth="1" opacity=".6" />
      <path d="M27.500 31v7M76 31v7" stroke="#25292f" strokeWidth="4.500" strokeLinecap="round" />
      <path d="M21 69c15 17 46 17 61 0" fill="none" stroke="#16181c" strokeWidth="3.600" strokeLinecap="round" />
    </svg>
  );
}
function Launchpad() {
  const cells = [
    "bg-[linear-gradient(#93f577,#60d147)]", "bg-[linear-gradient(#f7d04b,#eeaa33)]", "bg-[linear-gradient(#eba03b,#e2762f)]",
    "bg-[linear-gradient(#e2402f,#ab2a20)]", "bg-[linear-gradient(#b5c4c8,#6e7172)]", "bg-[linear-gradient(#ec5161,#e8475c)]",
    "bg-[linear-gradient(#a956dd,#6d2da3)]", "bg-[linear-gradient(#4cb8fa,#2b58e3)]", "bg-[linear-gradient(#7adcc0,#54b97c)]",
  ];
  return (
    <div className={ICON + " grid grid-cols-3 gap-[6px] bg-[linear-gradient(90deg,#bcc1cb,#cdc3be)] p-[17px]"}>
      {cells.map((c) => <span key={c} className={"rounded-[5px] shadow-[0_1px_2px_rgba(0,0,0,0.35)] " + c} />)}
    </div>
  );
}
function Safari() {
  return (
    <svg viewBox="0 0 103 103" className={ICON}>
      <defs>
        <linearGradient id="sa" x2="0" y2="1"><stop stopColor="#4ba5ee" /><stop offset="1" stopColor="#2e67dd" /></linearGradient>
        <linearGradient id="sb" x2="0" y2="1"><stop stopColor="#fff" /><stop offset="1" stopColor="#d5d5d5" /></linearGradient>
      </defs>
      <rect width="103" height="103" fill="url(#sb)" />
      <circle cx="51.500" cy="51.500" r="45" fill="url(#sa)" />
      <circle cx="51.500" cy="51.500" r="39" fill="none" stroke="#fff" strokeWidth="5" strokeDasharray="1 3.080" opacity=".9" />
      <path d="M84 25L55.500 57 47 46z" fill="#e2503f" />
      <path d="M21 79L47 46l8.500 11z" fill="#f5f5f5" />
    </svg>
  );
}
function Photos() {
  const petals: [number, string][] = [[0, "#ee8f34"], [45, "#f4dc45"], [90, "#a6cf4b"], [135, "#62b767"], [180, "#63a4dd"], [225, "#8273ba"], [270, "#bd64a2"], [315, "#e5493c"]];
  return (
    <svg viewBox="0 0 103 103" className={ICON}>
      <rect width="103" height="103" fill="#fbfbfb" />
      {petals.map(([a, c]) => (
        <rect key={a} x="38" y="7" width="27" height="43" rx="13.500" fill={c} opacity=".86" transform={`rotate(${a} 51.500 51.500)`} className="mix-blend-multiply" />
      ))}
    </svg>
  );
}
function Notes() {
  return (
    <svg viewBox="0 0 103 103" className={ICON}>
      <defs><linearGradient id="na" x2="0" y2="1"><stop stopColor="#fadf70" /><stop offset="1" stopColor="#f4c63e" /></linearGradient></defs>
      <rect width="103" height="103" fill="#f2f1ee" />
      <rect width="103" height="26" fill="url(#na)" />
      <path d="M0 27h103" stroke="#8b7f66" strokeWidth="2" />
      <path d="M1 31.500h102" stroke="#b5b2aa" strokeWidth="2" strokeDasharray="2 2" />
      <path d="M0 52h103M0 78h103" stroke="#d2d0cf" strokeWidth="2" />
    </svg>
  );
}
function AppStore() {
  return (
    <svg viewBox="0 0 103 103" className={ICON}>
      <defs><linearGradient id="aa" x2="0" y2="1"><stop stopColor="#50b5f4" /><stop offset="1" stopColor="#2a58d3" /></linearGradient></defs>
      <rect width="103" height="103" fill="url(#aa)" />
      <g stroke="#fff" strokeWidth="8" strokeLinecap="round">
        <path d="M56 23L36 60M46 23l4 6M55 43l22 36M19 63h38M72 63h11M29 74l-3 5" />
      </g>
    </svg>
  );
}
function Chrome() {
  return (
    <svg viewBox="0 0 103 103" className={ICON}>
      <rect width="103" height="103" fill="#f7f3f1" />
      <circle cx="52" cy="51.500" r="44.500" fill="#f2bd42" />
      <path d="M13.500 29.300a44.500 44.500 0 0 1 77 0H52a22.250 22.250 0 0 0-20 13z" fill="#d24b3b" />
      <path d="M13.500 29.300L32.800 62.600A22.250 22.250 0 0 0 52 73.800l17-9-17 31.200A44.500 44.500 0 0 1 13.500 29.300z" fill="#4d9a50" />
      <circle cx="52" cy="51.500" r="22" fill="#fff" />
      <circle cx="52" cy="51.500" r="17.500" fill="#3f78e4" />
    </svg>
  );
}
function Settings() {
  return (
    <svg viewBox="0 0 103 103" className={ICON}>
      <defs><linearGradient id="ga" x2="0" y2="1"><stop stopColor="#cddae1" /><stop offset="1" stopColor="#8f8e8d" /></linearGradient></defs>
      <rect width="103" height="103" fill="url(#ga)" />
      <circle cx="51.500" cy="51.500" r="45" fill="#2b2d2f" />
      <circle cx="51.500" cy="51.500" r="39.500" fill="none" stroke="#97999b" strokeWidth="5" strokeDasharray="2 2.130" />
      <circle cx="51.500" cy="51.500" r="34" fill="#38393b" stroke="#a9acae" strokeWidth="5" />
      <circle cx="51.500" cy="51.500" r="23" fill="#5a5c5e" stroke="#77797b" strokeWidth="5" strokeDasharray="2.500 1.800" />
      <path d="M51.500 51.500H84M51.500 51.500L35 22M51.500 51.500L35 81" stroke="#b6b9bb" strokeWidth="5" />
      <circle cx="51.500" cy="51.500" r="5.500" fill="#a5a8aa" /><circle cx="51.500" cy="51.500" r="2" fill="#222" />
    </svg>
  );
}
function Terminal() {
  return (
    <div className={ICON + " bg-[linear-gradient(#cfdfe8,#86888a)] p-[4px]"}>
      <div className="h-full w-full rounded-[20px] bg-black p-[7px]">
        <div className="h-full w-full rounded-[12px] bg-[#262626] pt-0.5 pl-[6px] font-['Liberation_Mono'] text-[25px] leading-[28px] font-bold text-white">&gt;_</div>
      </div>
    </div>
  );
}
function Calendar() {
  return (
    <div className={ICON + " flex flex-col items-center bg-[linear-gradient(#fdfdfd,#efeeec)]"}>
      <div className="flex h-8 w-full items-center justify-center bg-[#e3584d] pt-1 font-['Inter'] text-[20px] font-semibold text-white"><Fit w={45}>AUG</Fit></div>
      <div className="mt-[2px] font-['Inter'] text-[62px] leading-[62px] font-light text-[#2b2b2b]"><Fit w={64}>15</Fit></div>
    </div>
  );
}
function VSCode() {
  return (
    <svg viewBox="0 0 103 103" className={ICON}>
      <rect width="103" height="103" fill="#fff" />
      <path d="M15 67l5 4c1.500 1 3 1 4.500-.2L69 32V15.500L15.500 63c-1.500 1.300-1.500 3-.5 4z" fill="#2a66a9" />
      <path d="M15 36l5-4c1.500-1 3-1 4.500.2L69 70v17.500L15.500 40c-1.500-1.300-1.500-3-.5-4z" fill="#3478c6" />
      <path d="M68 88c-1.500-.5-2-2-2-4V19c0-2 .5-3.500 2-4l17 8c1.500.8 2 1.800 2 3.500V77c0 1.600-.6 2.600-2 3.300z" fill="#4897e6" />
      <path d="M69 32v39L44 51.500z" fill="#fff" />
    </svg>
  );
}
function PyCharm() {
  return (
    <div className="mx-[2.500px] flex size-[98px] shrink-0 items-center justify-center bg-[conic-gradient(from_-45deg,#57e84a,#b6ee4a,#f3ee57,#e9f05a,#b4e84c,#7ee845,#57e84a)] shadow-[0_2px_4px_rgba(0,0,0,0.4)]">
      <div className="h-[72px] w-[73px] bg-[linear-gradient(120deg,#101f12,#000)] pt-[5px] pl-[8px] font-['Open_Sans'] text-[38px] leading-[36px] font-extrabold text-white">
        <Fit w={50}>PC</Fit>
        <span className="mt-[17px] block h-[4.500px] w-[27px] bg-white" />
      </div>
    </div>
  );
}
function Vlc() {
  return (
    <svg viewBox="0 0 103 118" className="h-[118px] w-[103px] shrink-0">
      <defs>
        <linearGradient id="va" x2="0" y2="1"><stop stopColor="#db6d28" /><stop offset="1" stopColor="#f0973a" /></linearGradient>
        <linearGradient id="vb"><stop stopColor="#d4d4d6" /><stop offset=".5" stopColor="#f3f3f3" /><stop offset="1" stopColor="#cfcfd2" /></linearGradient>
      </defs>
      <path d="M13 74h79l11 40v3H0v-3z" fill="url(#va)" />
      <path d="M17 88c3 24 66 24 69 0l-2-10H19z" fill="#d96d2a" />
      <path d="M47 2c2-1.500 7-1.500 9 0l25 76c-3 14-56 14-60 0z" fill="#e88a30" />
      <path d="M41 19c4 3 17 3 21 0l7 20c-6 5-30 5-35 0z" fill="url(#vb)" />
      <path d="M28 59c8 8 40 8 48 0l5 20c-5 12-54 12-60 0z" fill="url(#vb)" />
    </svg>
  );
}
function Preview() {
  return (
    <div className="relative size-[103px] shrink-0">
      <svg viewBox="0 0 103 103" className={ICON}>
        <defs><linearGradient id="pa" x2="0" y2="1"><stop stopColor="#99b8e8" /><stop offset="1" stopColor="#c5cbdc" /></linearGradient></defs>
        <rect width="103" height="103" fill="#f2f1f0" />
        <clipPath id="pc"><rect x="8" y="9" width="87" height="86" rx="17" /></clipPath>
        <g clipPath="url(#pc)">
          <rect x="8" y="9" width="87" height="47" fill="url(#pa)" />
          <rect x="8" y="55" width="87" height="40" fill="#2d4580" />
          <path d="M8 66l12 3 10 6 14-4 12 8 39 2v14H8z" fill="#b9cbe0" />
          <path d="M8 68l8-2 10 6-4 5-14-2z" fill="#4b3c36" />
          <path d="M16 94l8-8 14 2 10 7z" fill="#6d5b4c" />
          <path d="M8 78l20 3 14 2-6 5-20 2-8-2z" fill="#e6edf4" />
        </g>
      </svg>
      <svg viewBox="0 0 66 60" className="absolute top-[49px] left-[43px] h-[60px] w-[66px]">
        <defs><linearGradient id="pb"><stop stopColor="#77797c" /><stop offset=".2" stopColor="#dcdddf" /><stop offset=".8" stopColor="#d2d3d5" /><stop offset="1" stopColor="#6b6d70" /></linearGradient></defs>
        <path d="M13 21h40l9 32c0 4-12 6.500-29 6.500S4 57 4 53z" fill="url(#pb)" stroke="#5c5e60" strokeWidth="1.200" />
        <path d="M14 46c8-5 30-5 38 0l2 6c-10 4-32 4-42 0z" fill="#fafafa" />
        <path d="M26 28l8-2-2 8zM36 30l6 4-5 5zM22 38l7 0-2 6zM32 40l6 1-4 4z" fill="#4b4e52" />
        <rect x="10" y="1" width="46" height="23" rx="4" fill="#151515" />
        <ellipse cx="33" cy="5" rx="21" ry="4" fill="#303030" />
      </svg>
    </div>
  );
}
function Numbers() {
  return (
    <div className={ICON + " flex items-end justify-center gap-[6px] bg-[linear-gradient(#92f073,#5fd043)] pb-[14px]"}>
      <span className="h-[22px] w-[12px] rounded-[2px] bg-[#f4f5f4]" />
      <span className="h-[40px] w-[12px] rounded-[2px] bg-[#f4f5f4]" />
      <span className="h-[74px] w-[12px] rounded-[2px] bg-[#f4f5f4]" />
      <span className="h-[55px] w-[12px] rounded-[2px] bg-[#f4f5f4]" />
    </div>
  );
}
function Trash() {
  return (
    <svg viewBox="0 0 92 120" className="h-[120px] w-[92px] shrink-0">
      <defs>
        <linearGradient id="ta"><stop stopColor="#56585a" /><stop offset=".3" stopColor="#8b8e90" /><stop offset=".6" stopColor="#77797b" /><stop offset="1" stopColor="#515355" /></linearGradient>
      </defs>
      <path d="M1 17c4-14 86-14 90 0L80 108c-4 14-64 14-68 0z" fill="url(#ta)" />
      <ellipse cx="46" cy="17" rx="44" ry="10" fill="#4a4c4e" />
      <path d="M5 14l6-7 8 2 10-8 9 7 8 5 7-10 10 10 10-2 8 6 3 9-4 2-16 3-28 2-22-4z" fill="#e4e4e2" />
      <path d="M20 16l10-4 12 4-12 10z" fill="#5c4038" /><path d="M30 12l12 1-4 4z" fill="#49b5e8" />
      <path d="M52 16l10-8 8 8-12 9z" fill="#33568a" /><path d="M60 18l8-2-4 8z" fill="#c2512c" />
      <path d="M40 16l6 2-2 10zM72 10l8 8-6 8zM8 12l8 12-4 0zM24 6l4 8-8-2z" fill="#a6a6a6" />
      <path d="M1 17c4 14 86 14 90 0" fill="none" stroke="#a5a7a9" strokeWidth="2" />
      <path d="M14 106c6 10 58 10 64 0" fill="none" stroke="#9ea0a2" strokeWidth="2" opacity=".7" />
    </svg>
  );
}

function DockItem({ children, dot = "", badge = false }: { children: ReactNode; dot?: string; badge?: boolean }) {
  return (
    <div className="relative flex h-[158px] w-[136px] shrink-0 flex-col items-center">
      <div className="flex h-[145px] items-center pb-[1px]">
        <div className="flex h-[103px] items-center">{children}</div>
      </div>
      <span className={"-mt-[2px] h-2 w-2 rounded-full " + dot} />
      {badge && (
        <span className="absolute top-[11px] right-0 flex size-[48px] items-center justify-center rounded-full bg-[#e5503f] font-['Inter'] text-[25px] text-white">1</span>
      )}
    </div>
  );
}

function Dock() {
  return (
    <div className="mt-px ml-[314px] flex h-[159px] w-[2313px] shrink-0 rounded-[44px] border-2 border-white/20 bg-[linear-gradient(rgba(20,5,20,0.28),transparent_75%),linear-gradient(90deg,#31598a_0%,#3a587e_7%,#6b5140_12%,#9a521f_17%,#a5601c_24%,#a64a1c_31%,#a5601c_43%,#a64e1c_52%,#a2381a_66%,#a2401c_74%,#a8581c_83%,#a54c1c_100%)] pl-[3px] shadow-[0_0_0_1px_rgba(0,0,0,0.4)]">
      <DockItem dot="bg-[#a9ccf7]"><Finder /></DockItem>
      <DockItem><Launchpad /></DockItem>
      <DockItem><Safari /></DockItem>
      <DockItem><Photos /></DockItem>
      <DockItem dot="bg-[#fbcf96]"><Notes /></DockItem>
      <DockItem><AppStore /></DockItem>
      <DockItem dot="bg-[#fbc193]"><Chrome /></DockItem>
      <DockItem badge><Settings /></DockItem>
      <DockItem><Terminal /></DockItem>
      <DockItem><Calendar /></DockItem>
      <DockItem><VSCode /></DockItem>
      <DockItem dot="bg-[#f7a98e]"><PyCharm /></DockItem>
      <div className="mt-[18px] ml-[32px] h-[118px] w-0.5 shrink-0 bg-[#d0714e]" />
      <div className="ml-[29px] flex">
        <DockItem dot="bg-[#fbb793]"><Vlc /></DockItem>
        <DockItem dot="bg-[#fbc793]"><Preview /></DockItem>
        <DockItem><Numbers /></DockItem>
      </div>
      <div className="mt-[18px] ml-[30px] h-[118px] w-0.5 shrink-0 bg-[#c9803f]" />
      <div className="mt-[11px] ml-[51px]"><Trash /></div>
    </div>
  );
}

export default function App() {
  return (
    <div className="flex h-[1912px] w-[2940px] flex-col overflow-hidden bg-[linear-gradient(90deg,#4069a6_0,#3f6ba6_636px,#c4643a_640px,#c8883a_1008px,#bf4c2a_1014px,#c2522c_1296px,#c0803a_1304px,#c4603a_1700px,#b8401f_2085px,#c07a38_2135px,#cf6a34_2500px,#d05c2e_2940px)]">
      <MenuBar />
      <div className="relative flex grow flex-col bg-[linear-gradient(180deg,transparent_1667px,rgba(0,0,0,0.62)_1672px,rgba(0,0,0,0.1)_1735px,transparent_1770px),linear-gradient(180deg,#6cabdb_0,#5b8fb5_130px,#b3a14e_200px,#c49a42_500px,#b06a30_860px,#b5923f_876px,#b08038_1200px,#9a6a48_1360px,#3f6a9a_1410px,#355f9a_1660px)] bg-[length:100%_100%,12px_1670px] bg-no-repeat">
        <span className="absolute top-[895px] left-1 h-4 w-1.5 border-2 border-r-0 border-[#d6d6d2] bg-[#7d7a70]" />
        <div className="mt-px ml-[9px] flex h-[1670px] w-[2931px] shrink-0 flex-col overflow-hidden rounded-[21px] border border-black bg-white">
          <TabStrip />
          <NavBar />
          <Bookmarks />
          <div className="h-0.5 shrink-0 bg-[#c8cacb]" />
          <PdfToolbar />
          <div className="flex h-[1220px] shrink-0 justify-start border-l-2 border-[#77797b] bg-[#525659] pl-[647px]">
            <Page />
          </div>
          <Downloads />
        </div>
        <Dock />
      </div>
    </div>
  );
}
